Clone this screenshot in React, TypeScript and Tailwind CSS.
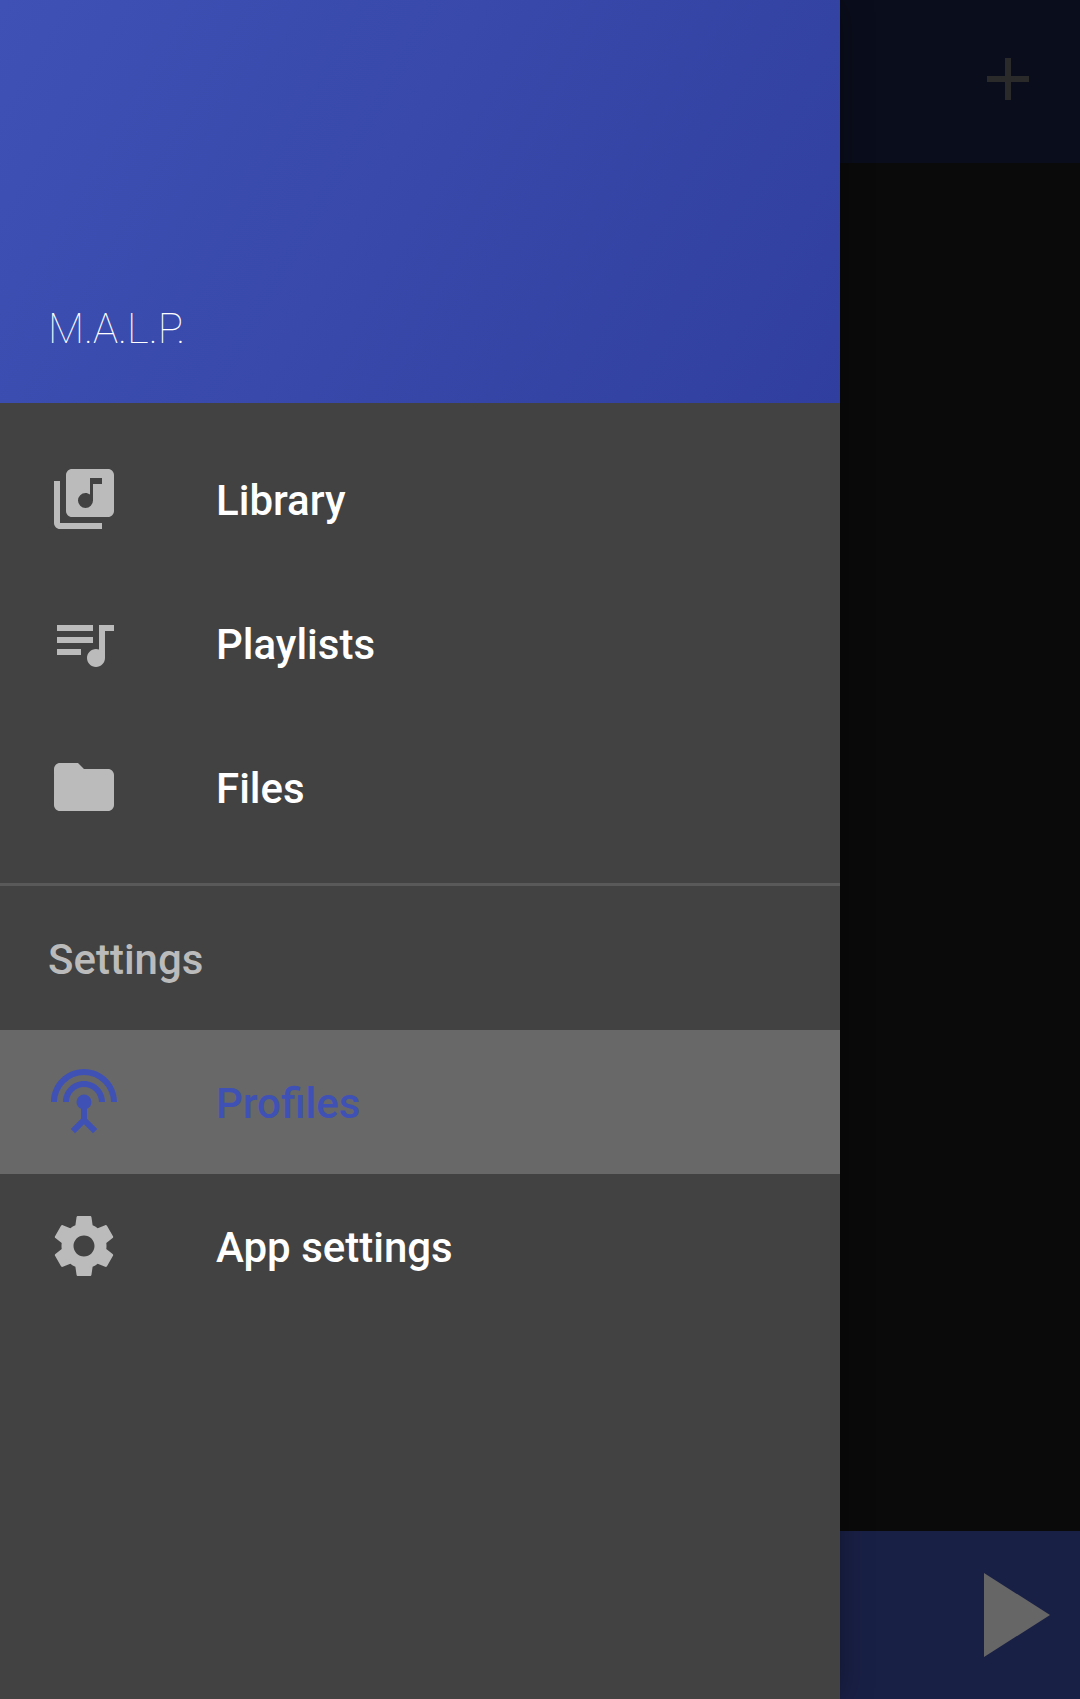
import React from "react";
import { MdLibraryMusic, MdQueueMusic, MdFolder, MdSettingsInputAntenna } from "react-icons/md";

const rowClass = "flex h-36 w-full items-center gap-24 px-12 text-left";

function GearIcon() {
  return (
    <svg viewBox="0 0 24 24" className="size-18" fill="currentColor" aria-hidden="true">
      <path d="M19.43 12.98c.04-.32.07-.64.07-.98s-.03-.66-.07-.98l2.11-1.65c.19-.15.24-.42.12-.64l-2-3.46c-.12-.22-.39-.3-.61-.22l-2.49 1c-.52-.4-1.08-.73-1.69-.98l-.38-2.65C14.46 2.18 14.25 2 14 2h-4c-.25 0-.46.18-.49.42l-.38 2.65c-.61.25-1.17.59-1.69.98l-2.49-1c-.23-.09-.49 0-.61.22l-2 3.46c-.13.22-.07.49.12.64l2.11 1.65c-.04.32-.07.65-.07.98s.03.66.07.98l-2.11 1.65c-.19.15-.24.42-.12.64l2 3.46c.12.22.39.3.61.22l2.49-1c.52.4 1.08.73 1.69.98l.38 2.65c.03.24.24.42.49.42h4c.25 0 .46-.18.49-.42l.38-2.65c.61-.25 1.17-.59 1.69-.98l2.49 1c.23.09.49 0 .61-.22l2-3.46c.12-.22.07-.49-.12-.64l-2.11-1.65zM12 15.5c-1.93 0-3.5-1.57-3.5-3.5s1.57-3.5 3.5-3.5 3.5 1.57 3.5 3.5-1.57 3.5-3.5 3.5z" />
    </svg>
  );
}

function Item({ icon, label, active = false }: { icon: React.ReactNode; label: string; active?: boolean }) {
  return (
    <li>
      <button
        type="button"
        aria-current={active ? "page" : undefined}
        className={active ? rowClass + " bg-[#686868] text-[#3f51b5]" : rowClass + " text-white"}
      >
        <span className={active ? "text-[72px]" : "text-[72px] text-[#bbbbbb]"}>{icon}</span>
        <span className="pt-0.5 text-[42px] font-medium">{label}</span>
      </button>
    </li>
  );
}

export default function App() {
  return (
    <div className="flex min-h-screen bg-[#0a0a0a] font-[Roboto,sans-serif]">
      <nav aria-label="Main" className="z-10 flex w-7/9 flex-col bg-[#424242] shadow-[0_0_30px_rgba(0,0,0,0.35)]">
        <header className="flex h-[403px] items-end bg-linear-120 from-[#3f51b5] to-[#303f9f] px-12 pb-11">
          <h1 className="text-[42px] leading-[60px] font-thin text-white">M.A.L.P.</h1>
        </header>
        <ul className="py-6">
          <Item icon={<MdLibraryMusic />} label="Library" />
          <Item icon={<MdQueueMusic />} label="Playlists" />
          <Item icon={<MdFolder />} label="Files" />
        </ul>
        <section className="border-t-3 border-[#595959]">
          <h2 className="flex h-36 items-center px-12 pt-0.5 text-[42px] font-medium text-[#bbbbbb]">Settings</h2>
          <ul>
            <Item icon={<MdSettingsInputAntenna />} label="Profiles" active />
            <Item icon={<GearIcon />} label="App settings" />
          </ul>
        </section>
      </nav>
      <main className="flex flex-1 flex-col justify-between">
        <div className="flex h-[163px] items-center justify-end bg-[#0a0d1c] pr-9 pb-[5px] text-[#2a2a2a]">
          <button type="button" aria-label="Add" className="size-18">
            <svg viewBox="0 0 24 24" className="size-18" fill="currentColor">
              <path d="M19 13h-6v6h-2v-6H5v-2h6V5h2v6h6v2z" />
            </svg>
          </button>
        </div>
        <div className="flex h-[168px] items-center justify-end bg-[#192046] text-[#666666]">
          <button type="button" aria-label="Play" className="size-36">
            <svg viewBox="0 0 24 24" className="size-36" fill="currentColor">
              <path d="M8 5v14l11-7z" />
            </svg>
          </button>
        </div>
      </main>
    </div>
  );
}
